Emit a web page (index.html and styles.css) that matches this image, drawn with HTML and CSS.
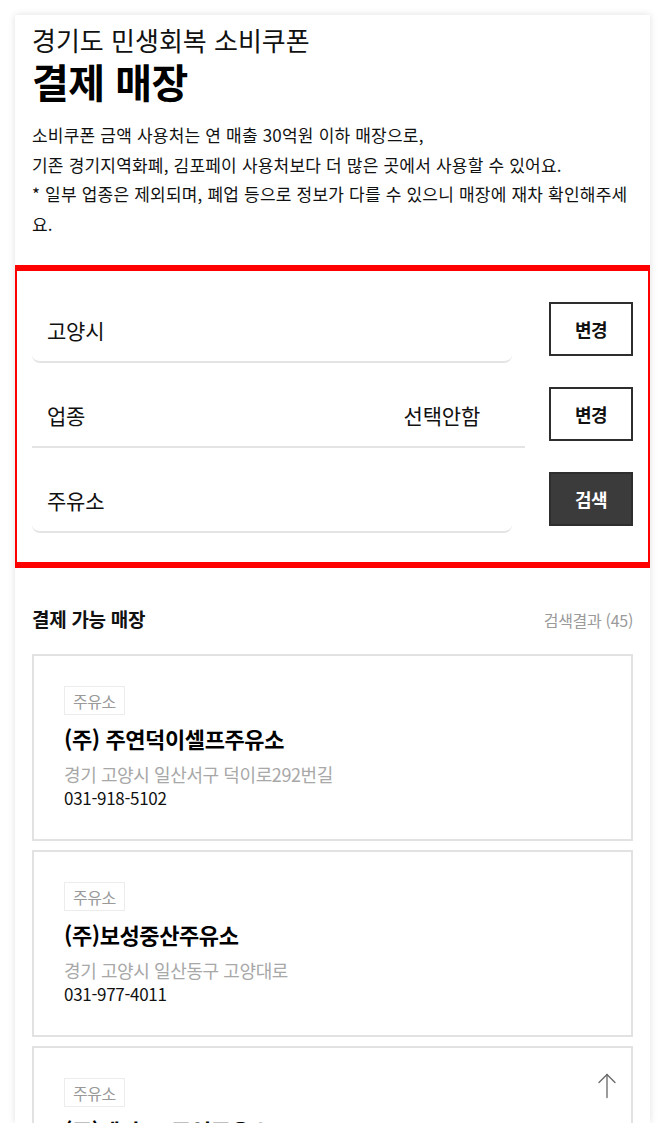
FILE: index.html
```html
<!DOCTYPE html>
<html lang="ko">
<head>
<meta charset="utf-8">
<title>결제 매장</title>
<link rel="stylesheet" href="styles.css">
</head>
<body>
<div class="page">
  <div class="sheet">
    <header class="intro">
      <div class="subtitle">경기도 민생회복 소비쿠폰</div>
      <h1 class="title">결제 매장</h1>
      <p class="desc">소비쿠폰 금액 사용처는 연 매출 30억원 이하 매장으로,<br>기존 경기지역화폐, 김포페이 사용처보다 더 많은 곳에서 사용할 수 있어요.<br>* 일부 업종은 제외되며, 폐업 등으로 정보가 다를 수 있으니 매장에 재차 확인해주세요.</p>
    </header>

    <section class="filter">
      <div class="row">
        <div class="field rounded"><span class="label">고양시</span></div>
        <button class="btn">변경</button>
      </div>
      <div class="row">
        <div class="field plain"><span class="label">업종</span><span class="value">선택안함</span></div>
        <button class="btn">변경</button>
      </div>
      <div class="row">
        <div class="field rounded"><span class="label">주유소</span></div>
        <button class="btn dark">검색</button>
      </div>
    </section>

    <section class="results">
      <div class="results-head">
        <h2 class="results-title">결제 가능 매장</h2>
        <span class="results-count">검색결과 (45)</span>
      </div>
      <ul class="list">
        <li class="store">
          <span class="tag">주유소</span>
          <div class="name">(주) 주연덕이셀프주유소</div>
          <div class="addr">경기 고양시 일산서구 덕이로292번길</div>
          <div class="tel">031-918-5102</div>
        </li>
        <li class="store">
          <span class="tag">주유소</span>
          <div class="name">(주)보성중산주유소</div>
          <div class="addr">경기 고양시 일산동구 고양대로</div>
          <div class="tel">031-977-4011</div>
        </li>
        <li class="store">
          <span class="tag">주유소</span>
          <div class="name">(주)세인TS 주엽주유소</div>
          <div class="addr">경기 고양시 일산서구 중앙로</div>
          <div class="tel">031-915-0000</div>
        </li>
      </ul>
    </section>

    <button class="to-top" aria-label="맨 위로">
      <svg width="20" height="26" viewBox="0 0 20 26" fill="none" stroke="#666" stroke-width="1.3" stroke-linecap="round" stroke-linejoin="round">
        <path d="M10 1.5 V24.5"/>
        <path d="M2 9.5 L10 1.5 L18 9.5"/>
      </svg>
    </button>
  </div>
</div>
</body>
</html>
```

FILE: styles.css
```css
* { box-sizing: border-box; }

html, body {
  margin: 0;
  padding: 0;
  background: #ffffff;
}

body {
  font-family: "Noto Sans CJK KR", "Noto Sans", sans-serif;
  color: #111;
}

.page {
  padding: 15px 15px 0 15px;
}

.sheet {
  position: relative;
  width: 635px;
  height: 1108px;
  overflow: hidden;
  background: #fff;
  box-shadow: 0 0 7px rgba(0, 0, 0, 0.13);
}

/* intro */
.intro {
  padding: 8px 17px 0 17px;
}

.subtitle {
  font-size: 26px;
  line-height: 34px;
  font-weight: 400;
  color: #111;
}

.title {
  margin: 0;
  font-size: 40px;
  line-height: 48px;
  font-weight: 700;
  letter-spacing: -0.5px;
  color: #000;
}

.desc {
  margin: 15px 0 0 0;
  font-size: 17px;
  line-height: 29.6px;
  letter-spacing: 0.2px;
  color: #111;
}

/* filter box */
.filter {
  margin-top: 27px;
  border-top: 6px solid #ff0000;
  border-bottom: 6px solid #ff0000;
  border-left: 2px solid #ff0000;
  border-right: 2px solid #ff0000;
  padding: 28px 15px 29px 15px;
  display: flex;
  flex-direction: column;
  gap: 21px;
}

.row {
  display: flex;
  align-items: flex-start;
  gap: 24px;
}

.field {
  flex: 1;
  height: 64px;
  display: flex;
  align-items: center;
  justify-content: space-between;
  padding: 0 45px 0 15px;
  border-bottom: 2px solid #e4e4e4;
  font-size: 21px;
  color: #111;
}

.field.rounded {
  margin-right: 13px;
  border-radius: 0 0 8px 8px;
}

.label, .value {
  line-height: 28px;
  letter-spacing: -0.2px;
}

.btn {
  flex: none;
  width: 84px;
  height: 54px;
  margin-top: 3px;
  border: 2px solid #2e2e2e;
  background: #fff;
  color: #111;
  font-family: inherit;
  font-size: 18px;
  font-weight: 700;
  letter-spacing: -0.5px;
  padding: 0;
}

.btn.dark {
  background: #3b3b3b;
  color: #fff;
}

/* results */
.results {
  padding: 38px 17px 0 17px;
}

.results-head {
  display: flex;
  justify-content: space-between;
  align-items: baseline;
}

.results-title {
  margin: 0;
  font-size: 19px;
  line-height: 26px;
  font-weight: 700;
  letter-spacing: -0.3px;
}

.results-count {
  font-size: 16px;
  color: #9a9a9a;
  letter-spacing: -0.3px;
}

.list {
  list-style: none;
  margin: 22px 0 0 0;
  padding: 0;
  display: flex;
  flex-direction: column;
  gap: 9px;
}

.store {
  border: 2px solid #e2e2e2;
  height: 187px;
  padding: 30px 30px 0 30px;
  display: flex;
  flex-direction: column;
  align-items: flex-start;
}

.tag {
  display: inline-flex;
  align-items: center;
  height: 29px;
  padding: 0 8px;
  border: 1.5px solid #ececec;
  font-size: 16px;
  color: #999;
  letter-spacing: -0.5px;
}

.name {
  margin-top: 8px;
  font-size: 22px;
  line-height: 30px;
  font-weight: 700;
  letter-spacing: -0.4px;
  color: #000;
}

.addr {
  margin-top: 9px;
  font-size: 18px;
  line-height: 24px;
  color: #a8a8a8;
  letter-spacing: -0.4px;
}

.tel {
  font-size: 17px;
  line-height: 24px;
  color: #111;
  letter-spacing: -0.3px;
}

.to-top {
  position: absolute;
  left: 581px;
  top: 1058px;
  width: 22px;
  height: 28px;
  padding: 0;
  border: 0;
  background: transparent;
}
```
